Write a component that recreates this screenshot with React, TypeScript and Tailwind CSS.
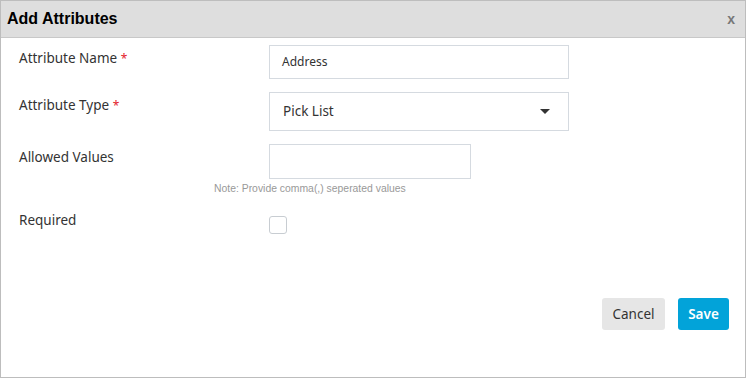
export default function App() {
  const labelCls = "pt-[3px] text-[13.5px] text-[#333]";
  return (
    <div className="h-[378px] w-[747px] bg-white">
      <div className="flex h-[378px] w-[746px] flex-col border border-[#bdbdbd] font-['Noto_Sans',sans-serif]">
        <div className="flex h-[37px] shrink-0 items-center justify-between border-b border-[#c8c8c8] bg-[#dedede] pl-[6px] pr-[10px]">
          <h2 className="font-['Liberation_Sans',Arial,sans-serif] text-[16px] font-bold text-black">Add Attributes</h2>
          <span className="font-['Liberation_Sans',Arial,sans-serif] text-[14px] font-bold text-[#777]">x</span>
        </div>

        <div className="flex flex-1 flex-col pl-[18px] pr-[16px] pt-[7px]">
          <div className="grid grid-cols-[250px_1fr] items-start">
            <label className={labelCls}>
              Attribute Name <span className="text-[12px] text-[#e3202a]">*</span>
            </label>
            <div className="flex h-[34px] w-[300px] items-center border border-[#d5dae0] px-[12px] text-[12px] text-[#333]">
              Address
            </div>
          </div>

          <div className="mt-[13px] grid grid-cols-[250px_1fr] items-start">
            <label className={labelCls}>
              Attribute Type <span className="text-[12px] text-[#e3202a]">*</span>
            </label>
            <div className="flex h-[39px] w-[300px] items-center justify-between border border-[#d5dae0] pl-[13px] pr-[18px] text-[13.5px] text-[#333]">
              <span>Pick List</span>
              <svg width="10" height="5" viewBox="0 0 10 5">
                <path d="M0 0h10L5 5z" fill="#333" />
              </svg>
            </div>
          </div>

          <div className="mt-[13px] grid grid-cols-[250px_1fr] items-start">
            <label className={labelCls}>Allowed Values</label>
            <div>
              <div className="h-[35px] w-[202px] border border-[#d5dae0]" />
            </div>
          </div>
          <div className="ml-[195px] mt-[2px] font-['Liberation_Sans',Arial,sans-serif] text-[10.4px] text-[#999]">
            Note: Provide comma(,) seperated values
          </div>

          <div className="mt-[13px] grid grid-cols-[250px_1fr] items-start">
            <label className="text-[13.5px] text-[#333]">Required</label>
            <div className="mt-[6px] h-[18px] w-[18px] rounded-[3px] border border-[#c8cdd2] bg-white" />
          </div>

          <div className="mt-auto mb-[47px] flex justify-end gap-[13px]">
            <button className="h-[32px] w-[63px] rounded-[3px] bg-[#e6e6e6] text-[13.5px] text-[#333]">Cancel</button>
            <button className="h-[32px] w-[51px] rounded-[3px] bg-[#02a3d9] text-[13.5px] font-semibold text-white">Save</button>
          </div>
        </div>
      </div>
    </div>
  );
}
